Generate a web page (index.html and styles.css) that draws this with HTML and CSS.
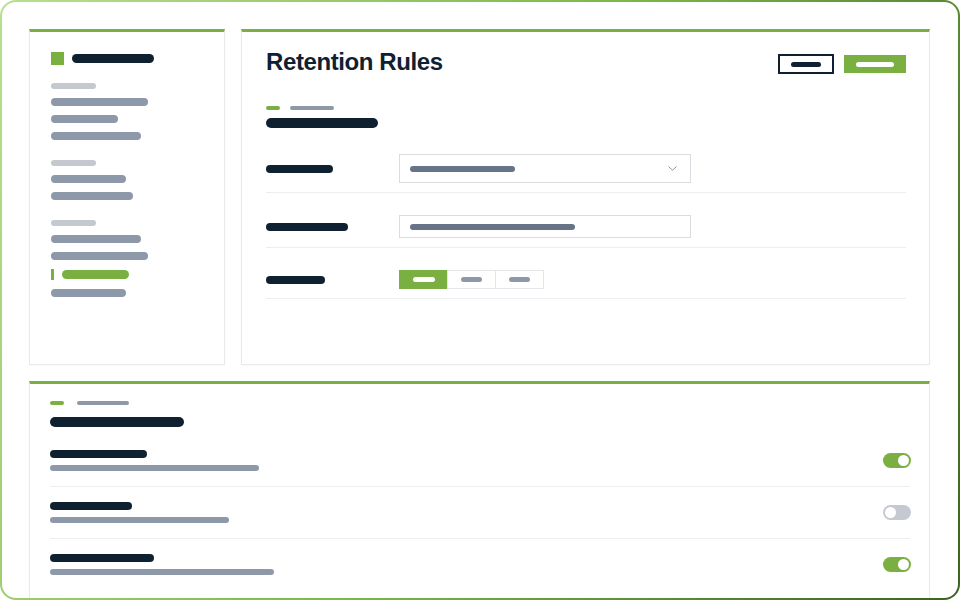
FILE: index.html
```html
<!DOCTYPE html>
<html lang="en">
<head>
<meta charset="utf-8">
<title>Retention Rules</title>
<link rel="stylesheet" href="styles.css">
</head>
<body>
<div class="frame">
  <div class="top">
    <aside class="card sidebar">
      <div class="brand">
        <span class="logo"></span>
        <span class="bar dark tall" style="width:82px"></span>
      </div>
      <div class="group">
        <span class="bar light" style="width:45px"></span>
        <span class="bar gray" style="width:97px"></span>
        <span class="bar gray" style="width:67px"></span>
        <span class="bar gray" style="width:90px"></span>
      </div>
      <div class="group">
        <span class="bar light" style="width:45px"></span>
        <span class="bar gray" style="width:75px"></span>
        <span class="bar gray" style="width:82px"></span>
      </div>
      <div class="group">
        <span class="bar light" style="width:45px"></span>
        <span class="bar gray" style="width:90px"></span>
        <span class="bar gray" style="width:97px"></span>
        <div class="active-item">
          <span class="indicator"></span>
          <span class="bar green tall" style="width:67px"></span>
        </div>
        <span class="bar gray" style="width:75px"></span>
      </div>
    </aside>

    <main class="card main">
      <div class="header">
        <h1 class="title">Retention Rules</h1>
        <div class="actions">
          <div class="btn-outline"><span class="bar dark btn-label" style="width:30px"></span></div>
          <div class="btn-primary"><span class="bar white btn-label" style="width:38px"></span></div>
        </div>
      </div>
      <div class="eyebrow">
        <span class="bar green thin" style="width:14px"></span>
        <span class="bar gray thin" style="width:44px"></span>
      </div>
      <span class="bar dark heading" style="width:112px"></span>

      <div class="form">
        <div class="form-row">
          <div class="label"><span class="bar dark" style="width:67px"></span></div>
          <div class="select">
            <span class="bar slate" style="width:105px"></span>
            <svg class="chevron" width="9" height="5" viewBox="0 0 9 5"><path d="M0.5 0.5 L4.5 4.2 L8.5 0.5" fill="none" stroke="#8c96a4" stroke-width="1"/></svg>
          </div>
        </div>
        <div class="form-row">
          <div class="label"><span class="bar dark" style="width:82px"></span></div>
          <div class="input">
            <span class="bar slate" style="width:165px"></span>
          </div>
        </div>
        <div class="form-row">
          <div class="label"><span class="bar dark" style="width:59px"></span></div>
          <div class="segmented">
            <div class="opt on"><span class="bar white seg-label" style="width:22px"></span></div>
            <div class="opt"><span class="bar gray seg-label" style="width:21px"></span></div>
            <div class="opt"><span class="bar gray seg-label" style="width:21px"></span></div>
          </div>
        </div>
      </div>
    </main>
  </div>

  <section class="card bottom">
    <div class="eyebrow wide">
      <span class="bar green thin" style="width:14px"></span>
      <span class="bar gray thin" style="width:52px"></span>
    </div>
    <span class="bar dark heading2" style="width:134px"></span>
    <div class="settings">
      <div class="setting">
        <div class="setting-text">
          <span class="bar dark" style="width:97px"></span>
          <span class="bar gray sub" style="width:209px"></span>
        </div>
        <div class="toggle on"><span class="knob"></span></div>
      </div>
      <div class="setting">
        <div class="setting-text">
          <span class="bar dark" style="width:82px"></span>
          <span class="bar gray sub" style="width:179px"></span>
        </div>
        <div class="toggle"><span class="knob"></span></div>
      </div>
      <div class="setting">
        <div class="setting-text">
          <span class="bar dark" style="width:104px"></span>
          <span class="bar gray sub" style="width:224px"></span>
        </div>
        <div class="toggle on"><span class="knob"></span></div>
      </div>
    </div>
  </section>
</div>
</body>
</html>
```

FILE: styles.css
```css
* { box-sizing: border-box; }

html, body {
  margin: 0;
  padding: 0;
  background: #ffffff;
  font-family: "Liberation Sans", Arial, sans-serif;
}

.frame {
  width: 960px;
  height: 600px;
  border: 2px solid transparent;
  border-radius: 16px;
  background:
    linear-gradient(#ffffff, #ffffff) padding-box,
    linear-gradient(115deg, #b8df8e 0%, #7db84b 50%, #3a6420 100%) border-box;
  overflow: hidden;
  padding: 27px 28px 0 27px;
  display: flex;
  flex-direction: column;
  gap: 16px;
}

.top {
  display: flex;
  gap: 16px;
  height: 336px;
  flex: none;
}

.card {
  background: #ffffff;
  border: 1px solid #e7e9ec;
  border-top: 3px solid #7ab041;
  box-shadow: 0 1px 2px rgba(15, 33, 48, 0.03);
}

/* generic skeleton bars */
.bar {
  display: block;
  height: 8px;
  border-radius: 999px;
  flex: none;
}
.bar.dark { background: #0f2130; }
.bar.gray { background: #8d98a9; }
.bar.light { background: #c4c8cf; height: 6px; }
.bar.green { background: #7ab041; }
.bar.white { background: #ffffff; }
.bar.slate { background: #677386; height: 6px; }
.bar.tall { height: 9px; }
.bar.thin { height: 4px; }

/* sidebar */
.sidebar {
  width: 196px;
  flex: none;
  padding: 20px 20px 0 21px;
  display: flex;
  flex-direction: column;
}

.brand {
  display: flex;
  align-items: center;
  gap: 8px;
  margin-bottom: 18px;
}

.logo {
  display: block;
  width: 13px;
  height: 13px;
  background: #7ab041;
}

.group {
  display: flex;
  flex-direction: column;
  gap: 9px;
}
.group + .group { margin-top: 20px; }

.active-item {
  display: flex;
  align-items: center;
  gap: 8px;
}

.indicator {
  display: block;
  width: 3px;
  height: 11px;
  background: #7ab041;
}

/* main */
.main {
  flex: 1;
  padding: 0 23px 0 24px;
  display: flex;
  flex-direction: column;
}

.header {
  display: flex;
  justify-content: space-between;
  align-items: flex-start;
  padding-top: 16px;
}

.title {
  margin: 0;
  font-size: 24px;
  line-height: 28px;
  font-weight: 700;
  letter-spacing: -0.4px;
  color: #0f2130;
}

.actions {
  display: flex;
  align-items: center;
  gap: 10px;
  margin-top: 6px;
}

.btn-outline {
  width: 56px;
  height: 20px;
  border: 2px solid #0f2130;
  display: flex;
  align-items: center;
  justify-content: center;
}

.btn-primary {
  width: 62px;
  height: 18px;
  background: #7ab041;
  display: flex;
  align-items: center;
  justify-content: center;
}

.btn-label { height: 5px; }

.eyebrow {
  display: flex;
  align-items: center;
  gap: 10px;
  margin-top: 30px;
}

.heading {
  height: 10px;
  margin-top: 8px;
}

.form {
  margin-top: 4px;
  display: flex;
  flex-direction: column;
}

.form-row {
  display: flex;
  align-items: center;
  padding: 22px 0 9px;
  border-bottom: 1px solid #eceef1;
}

.label {
  width: 133px;
  flex: none;
}

.select,
.input {
  width: 292px;
  border: 1px solid #d9dce1;
  display: flex;
  align-items: center;
  padding: 0 13px 0 10px;
}

.select {
  height: 29px;
  justify-content: space-between;
}

.input { height: 23px; }

.chevron { display: block; }

.segmented {
  display: flex;
}

.opt {
  width: 49px;
  height: 19px;
  border: 1px solid #e4e6ea;
  display: flex;
  align-items: center;
  justify-content: center;
}
.opt + .opt { margin-left: -1px; }
.opt.on {
  background: #7ab041;
  border-color: #7ab041;
}

.seg-label { height: 5px; }

/* bottom settings card */
.bottom {
  flex: 1;
  border-bottom: none;
  padding: 17px 19px 0 20px;
  display: flex;
  flex-direction: column;
}

.eyebrow.wide {
  gap: 13px;
  margin-top: 0;
}

.heading2 {
  height: 10px;
  margin-top: 12px;
}

.settings {
  margin-top: 8px;
  display: flex;
  flex-direction: column;
}

.setting {
  display: flex;
  justify-content: space-between;
  align-items: center;
  padding: 15px 0;
  border-bottom: 1px solid #eceef1;
}
.setting:last-child { border-bottom: none; }

.setting-text {
  display: flex;
  flex-direction: column;
}

.bar.sub {
  height: 6px;
  margin-top: 7px;
}

.toggle {
  width: 28px;
  height: 15px;
  border-radius: 8px;
  background: #c5c9d2;
  padding: 2px;
  display: flex;
  justify-content: flex-start;
  margin-right: -1px;
}
.toggle.on {
  background: #7ab041;
  justify-content: flex-end;
}

.knob {
  display: block;
  width: 11px;
  height: 11px;
  border-radius: 50%;
  background: #ffffff;
}
```
